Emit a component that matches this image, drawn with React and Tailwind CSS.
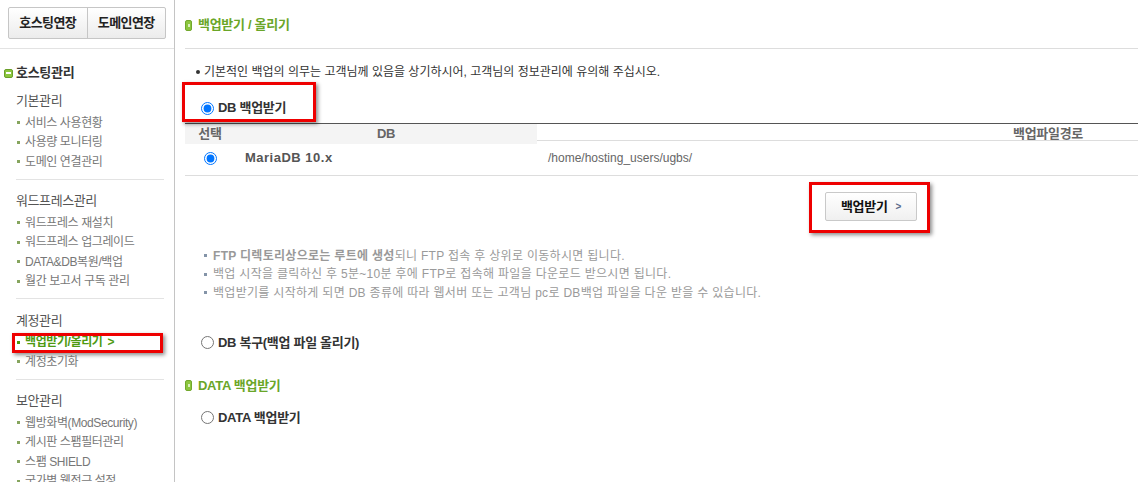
import React from 'react'

const groups = [
  { title: '기본관리', items: ['서비스 사용현황', '사용량 모니터링', '도메인 연결관리'], first: true },
  { title: '워드프레스관리', items: ['워드프레스 재설치', '워드프레스 업그레이드', 'DATA&DB복원/백업', '월간 보고서 구독 관리'] },
  { title: '계정관리', items: ['백업받기/올리기', '계정초기화'], active: '백업받기/올리기' },
  { title: '보안관리', items: ['웹방화벽(ModSecurity)', '게시판 스팸필터관리', '스팸 SHIELD', '국가별 웹접근 설정'] },
]

const notes = [
  { bold: 'FTP 디렉토리상으로는 루트에 생성', text: '되니 FTP 접속 후 상위로 이동하시면 됩니다.' },
  { text: '백업 시작을 클릭하신 후 5분~10분 후에 FTP로 접속해 파일을 다운로드 받으시면 됩니다.' },
  { text: '백업받기를 시작하게 되면 DB 종류에 따라 웹서버 또는 고객님 pc로 DB백업 파일을 다운 받을 수 있습니다.' },
]

function RedBox({ className }) {
  return <span className={`pointer-events-none absolute border-[3px] border-[#ee0000] shadow-[2px_2px_4px_rgba(0,0,0,0.45)] ${className}`} />
}

function SideItem({ label, active }) {
  return (
    <li className={`relative flex items-center h-[19.5px] pl-px text-[12px] tracking-[-0.4px] ${active ? 'text-[#4e9a12] font-bold' : 'text-[#777]'}`}>
      <span className={`w-[3px] h-[3px] mr-[5px] shrink-0 ${active ? 'bg-[#4e9a12]' : 'bg-[#86a55e]'}`} />
      <span className="whitespace-nowrap">{label}</span>
      {active && <span className="ml-[5px] font-bold">&gt;</span>}
      {active && <RedBox className="-left-[4px] right-[1px] top-0 -bottom-px" />}
    </li>
  )
}

function SectionTitle({ children }) {
  return (
    <div className="flex items-center h-[18px] gap-[6px] text-[13px] font-bold tracking-[-0.3px] text-[#6aa628]">
      <span className="flex items-center justify-center w-[7px] h-[11px] rounded-[2px] bg-[#8cc63e] border border-[#72a82e]">
        <span className="w-[2px] h-[3px] bg-[#d9efbd]" />
      </span>
      {children}
    </div>
  )
}

function RadioRow({ label, checked, boxed }) {
  return (
    <label className="relative flex items-center h-[18px] pl-[16px] gap-[4px] text-[13px] font-bold tracking-[-0.3px] text-[#333] w-fit">
      <input type="radio" name="mode" readOnly checked={checked} className="m-0 w-[13px] h-[13px]" />
      {label}
      {boxed && <RedBox className="-left-[3px] -right-[30px] -top-[17px] -bottom-[5px]" />}
    </label>
  )
}

export default function App() {
  return (
    <div className="flex h-[482px] overflow-hidden bg-white font-['Liberation_Sans','Noto_Sans_CJK_KR',sans-serif]">
      <aside className="w-[175px] shrink-0 border-r border-[#c4c4c4]">
        <div className="pt-[7px] pb-[9px] border-b border-[#e3e3e3]">
          <div className="mx-[8px] flex h-[32px] rounded-[2px] border border-[#c6c6c6] bg-gradient-to-b from-white to-[#ececec] text-[13px] font-bold tracking-[-0.6px] text-[#222]">
            <div className="flex-1 flex items-center justify-center border-r border-[#c6c6c6]">호스팅연장</div>
            <div className="flex-1 flex items-center justify-center">도메인연장</div>
          </div>
        </div>
        <div className="pt-[15px] pl-[4px] flex items-center gap-[3px] h-[33px] text-[13px] font-bold tracking-[-0.3px] text-[#333]">
          <span className="flex items-center justify-center w-[9px] h-[9px] rounded-[2px] bg-[#8cc63e] border border-[#6a9f2a]">
            <span className="w-[5px] h-[1.5px] bg-white" />
          </span>
          호스팅관리
        </div>
        {groups.map((g) => (
          <div key={g.title} className={`ml-[16px] mr-[10px] pb-[7px] border-b border-[#e3e3e3] ${g.first ? 'pt-[10px]' : 'pt-[12.5px]'}`}>
            <div className="h-[18px] leading-[18px] text-[13px] tracking-[-0.4px] text-[#555] mb-[3px]">{g.title}</div>
            <ul>
              {g.items.map((it) => (
                <SideItem key={it} label={it} active={it === g.active} />
              ))}
            </ul>
          </div>
        ))}
      </aside>

      <main className="flex-1 pl-[10px] pr-[2px]">
        <div className="pt-[16px] pb-[14px] border-b border-[#dddddd]">
          <SectionTitle>백업받기 / 올리기</SectionTitle>
        </div>

        <div className="mt-[14px] pl-[11px] flex items-center h-[18px] text-[12px] text-[#333]">
          <span className="w-[4px] h-[4px] rounded-full bg-[#333] mr-[4px]" />
          기본적인 백업의 의무는 고객님께 있음을 상기하시어, 고객님의 정보관리에 유의해 주십시오.
        </div>

        <div className="mt-[18px] flex">
          <RadioRow label="DB 백업받기" checked boxed />
        </div>

        <div className="mt-[6px] border-t border-[#555]">
          <div className="grid grid-cols-[50px_302px_1fr] h-[17px] border-b border-[#ddd] text-[13px] font-bold tracking-[-0.3px] text-[#666]">
            <div className="bg-[#f4f4f4] flex items-center justify-center">선택</div>
            <div className="bg-[#f4f4f4] flex items-center justify-center">DB</div>
            <div className="flex items-center justify-end pr-[55px]">백업파일경로</div>
          </div>
          <div className="grid grid-cols-[50px_302px_1fr] h-[35px] border-b border-[#ddd] items-center">
            <div className="flex justify-center">
              <input type="radio" name="db" readOnly checked className="m-0 w-[13px] h-[13px]" />
            </div>
            <div className="pl-[10px] text-[13px] font-bold tracking-[0.5px] text-[#555]">MariaDB 10.x</div>
            <div className="pl-[11px] text-[12px] text-[#666]">/home/hosting_users/ugbs/</div>
          </div>
        </div>

        <div className="relative mt-[16px] ml-[640px] w-[92px] h-[29px]">
          <button className="w-full h-full flex items-center justify-center gap-[8px] rounded-[2px] border border-[#c9c9c9] bg-gradient-to-b from-white to-[#f0f0f0] text-[13px] font-bold tracking-[-0.3px] text-[#111]">
            백업받기
            <span className="text-[10px] text-[#5a6a8a]">&gt;</span>
          </button>
          <RedBox className="-left-[16px] -right-[13px] -top-[10px] -bottom-[12px]" />
        </div>

        <ul className="mt-[25.5px] pl-[19px] text-[12px] tracking-[0.3px] text-[#9a9a9a] leading-[18.5px]">
          {notes.map((n, i) => (
            <li key={i} className="flex items-center">
              <span className="w-[3px] h-[3px] mr-[6px] bg-[#8494a8] shrink-0" />
              <span className="whitespace-nowrap">
                {n.bold && <b className="text-[#999]">{n.bold}</b>}
                {n.text}
              </span>
            </li>
          ))}
        </ul>

        <div className="mt-[31.5px] flex">
          <RadioRow label="DB 복구(백업 파일 올리기)" />
        </div>

        <div className="mt-[25px]">
          <SectionTitle>DATA 백업받기</SectionTitle>
        </div>

        <div className="mt-[14px] flex">
          <RadioRow label="DATA 백업받기" />
        </div>
      </main>
    </div>
  )
}
